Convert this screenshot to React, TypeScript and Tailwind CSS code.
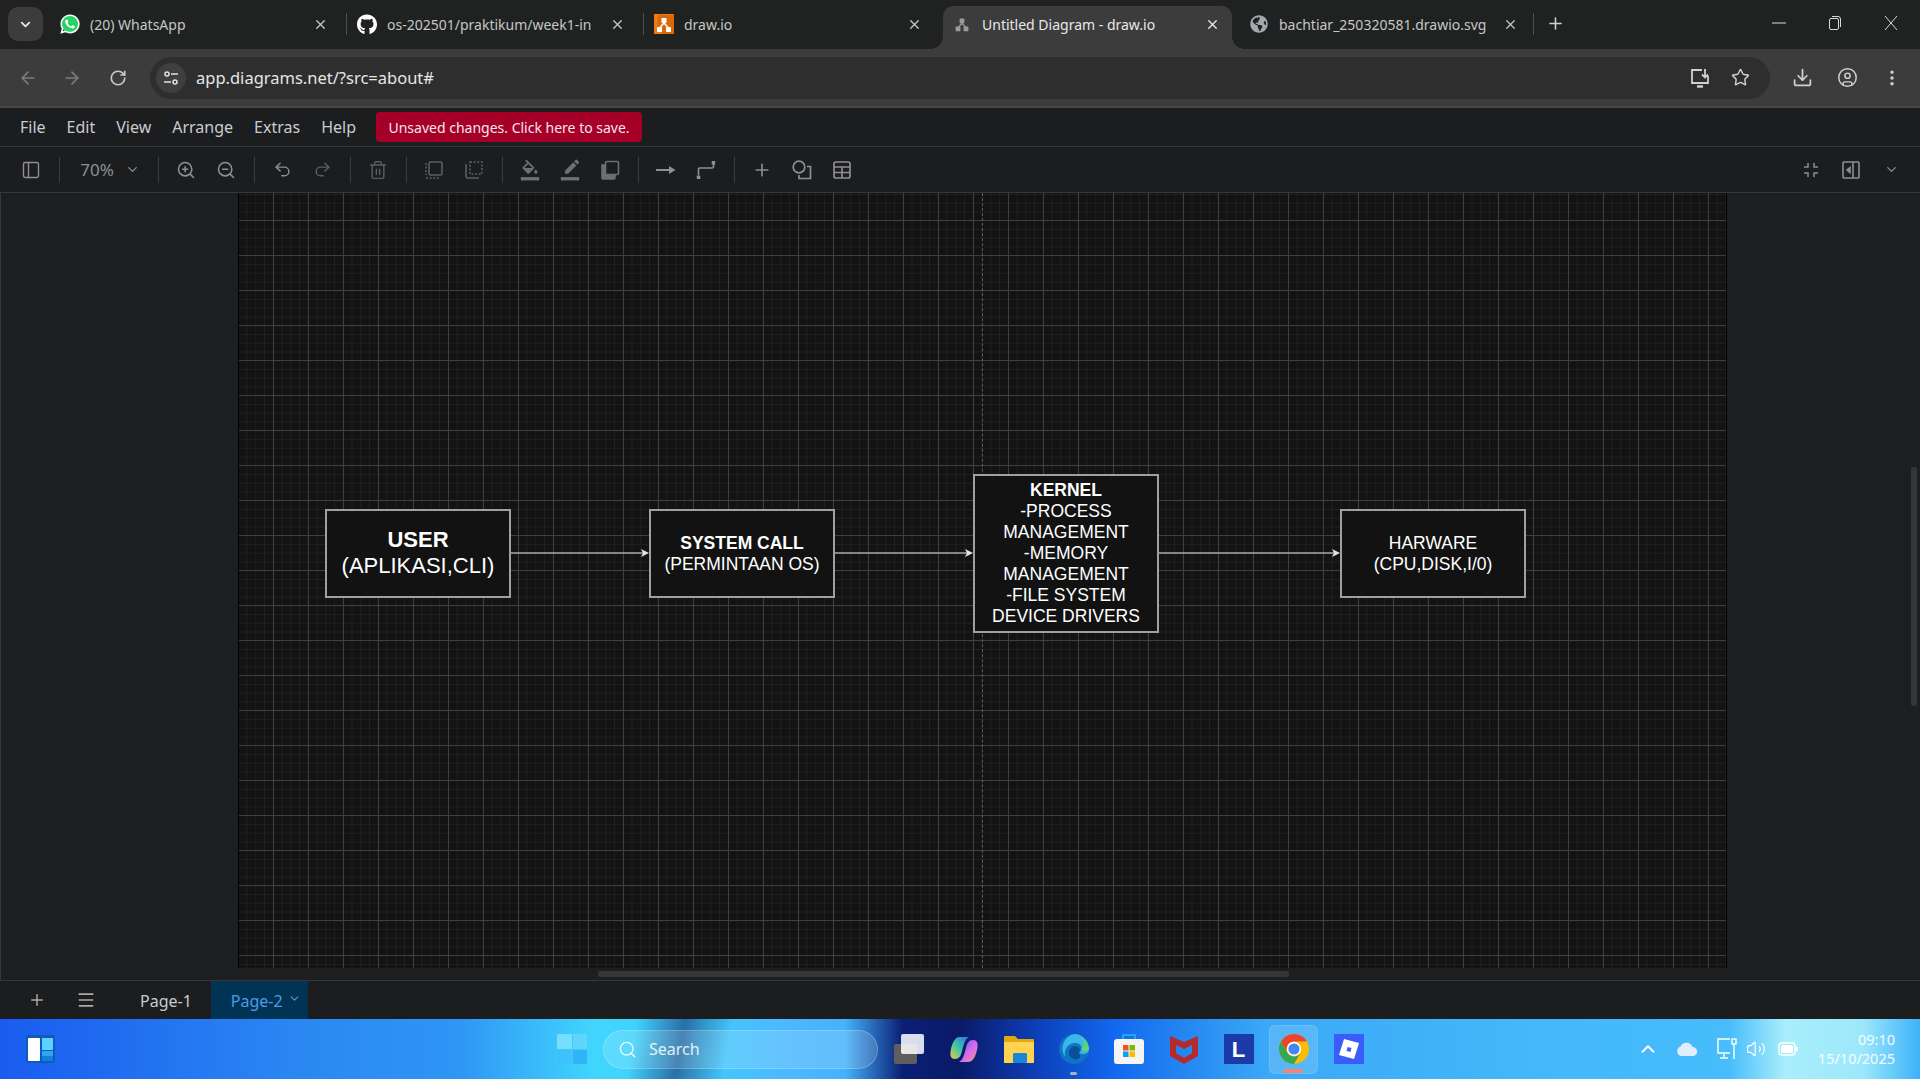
import React from "react";
import {
  ArrowLeft,
  ArrowRight,
  ChevronDown,
  ChevronUp,
  CircleUser,
  Download,
  EllipsisVertical,
  Menu,
  PanelLeft,
  Plus,
  Redo2,
  RotateCw,
  Search,
  Star,
  Trash2,
  Undo2,
  Volume2,
  X,
  ZoomIn,
  ZoomOut,
} from "lucide-react";
import { FaGithub, FaGlobeAmericas, FaWhatsapp } from "react-icons/fa";

const DrawioLogo = () => (
  <svg width="20" height="20" viewBox="0 0 20 20">
    <rect width="20" height="20" rx="1" fill="#ee7d12" />
    <path d="M4 1 L20 1 L20 20 L9 20 L3 14 Z" fill="#d9680a" />
    <path d="M10 9 L5.5 14 M10 9 L14.5 14" stroke="#fff" strokeWidth="1.4" />
    <rect x="7.5" y="4" width="5" height="5" rx="0.6" fill="#fff" />
    <rect x="3" y="13" width="5" height="5" rx="0.6" fill="#fff" />
    <rect x="12" y="13" width="5" height="5" rx="0.6" fill="#fff" />
  </svg>
);

const DrawioMono = () => (
  <svg width="16" height="16" viewBox="0 0 20 20" fill="#9a9a9a">
    <path d="M10 9 L5.5 14 M10 9 L14.5 14" stroke="#9a9a9a" strokeWidth="1.6" />
    <rect x="7" y="3" width="6" height="6" rx="0.6" />
    <rect x="2" y="13" width="6" height="6" rx="0.6" />
    <rect x="12" y="13" width="6" height="6" rx="0.6" />
  </svg>
);

const WhatsappIcon = () => (
  <span className="relative flex h-[22px] w-[22px] items-center justify-center">
    <span className="absolute left-[2px] top-[2px] h-[18px] w-[18px] rounded-full bg-[#25d366]" />
    <FaWhatsapp size={22} className="relative text-white" />
  </span>
);

const Tab = ({
  icon,
  title,
  active,
  divider,
}: {
  icon: React.ReactNode;
  title: string;
  active?: boolean;
  divider?: boolean;
}) => (
  <div
    className={
      active
        ? "relative ml-[2px] flex h-[43px] w-[289px] items-center self-end rounded-t-[10px] bg-[#3c3c3c] pb-[7px] pl-[9px] pr-[12px] text-[#e8e8e8]"
        : "relative flex h-[43px] w-[297px] items-center self-end pb-[7px] pl-[10px] pr-[19px] text-[#c4c7c5]"
    }
  >
    {active && (
      <>
        <span className="absolute -left-3 bottom-0 h-3 w-3 bg-[radial-gradient(circle_at_0_0,transparent_11.5px,#3c3c3c_12px)]" />
        <span className="absolute -right-3 bottom-0 h-3 w-3 bg-[radial-gradient(circle_at_100%_0,transparent_11.5px,#3c3c3c_12px)]" />
      </>
    )}
    <span className="flex w-[20px] shrink-0 items-center justify-center">{icon}</span>
    <span className="ml-[10px] flex-1 whitespace-nowrap text-[14px]">{title}</span>
    <X size={15} strokeWidth={2.2} className="ml-2 shrink-0" />
    {divider && <span className="absolute right-0 top-[7px] h-[22px] w-px bg-[#4c4e50]" />}
  </div>
);

const TabStrip = () => (
  <div className="flex h-[49px] shrink-0 items-stretch bg-[#202222]">
    <div className="ml-2 mt-[7px] flex h-[34px] w-[35px] items-center justify-center rounded-[10px] bg-[#3c3c3c]">
      <ChevronDown size={15} strokeWidth={3} className="text-[#e3e3e3]" />
    </div>
    <div className="ml-[7px] flex">
      <Tab icon={<WhatsappIcon />} title="(20) WhatsApp" divider />
      <Tab icon={<FaGithub size={21} className="text-white" />} title="os-202501/praktikum/week1-in" divider />
      <Tab icon={<DrawioLogo />} title="draw.io" />
      <Tab icon={<DrawioMono />} title="Untitled Diagram - draw.io" active />
      <div className="relative ml-[6px] flex h-[43px] w-[297px] items-center self-end pb-[7px] pl-[12px] pr-[17px] text-[#c4c7c5]">
        <FaGlobeAmericas size={18} className="shrink-0 text-[#a5a8aa]" />
        <span className="ml-[11px] flex-1 whitespace-nowrap text-[14px]">bachtiar_250320581.drawio.svg</span>
        <X size={15} strokeWidth={2} className="ml-2 shrink-0" />
        <span className="absolute right-[1px] top-[7px] h-[22px] w-px bg-[#4c4e50]" />
      </div>
    </div>
    <Plus size={19} strokeWidth={2} className="ml-[11px] mt-[14px] text-[#d0d0d0]" />
    <div className="ml-auto flex text-[#d8d8d8]">
      <svg width="14" height="14" viewBox="0 0 14 14" className="mr-[42px] mt-[16px]">
        <path d="M0 7 H14" stroke="currentColor" strokeWidth="1" />
      </svg>
      <svg width="14" height="18" viewBox="0 0 14 18" className="mr-[42px] mt-[15px]">
        <rect x="1.5" y="3.5" width="9" height="11" rx="1.5" fill="none" stroke="currentColor" />
        <path d="M4 1.5 H10 Q12.5 1.5 12.5 4 V12" fill="none" stroke="currentColor" />
      </svg>
      <svg width="14" height="14" viewBox="0 0 14 14" className="mr-[22px] mt-[16px]">
        <path d="M1 0 L13 14 M13 0 L1 14" stroke="currentColor" strokeWidth="1" />
      </svg>
    </div>
  </div>
);

const AddressRow = () => (
  <div className="flex h-[59px] shrink-0 items-center border-b-2 border-[#474747] bg-[#3c3c3c]">
    <ArrowLeft size={20} className="ml-[18px] text-[#7c7c7c]" />
    <ArrowRight size={20} className="ml-[24px] text-[#7c7c7c]" />
    <RotateCw size={18} strokeWidth={2.2} className="ml-[27px] text-[#c8c8c8]" />
    <div className="ml-[23px] flex h-[42px] w-[1620px] items-center rounded-full bg-[#2e2e2e] pl-[6px] pr-[20px]">
      <div className="flex h-[30px] w-[30px] items-center justify-center rounded-full bg-[#3f3f3f]">
        <svg width="16" height="16" viewBox="0 0 16 16" fill="none" stroke="#e3e3e3" strokeWidth="1.5">
          <circle cx="4" cy="4" r="2" />
          <path d="M8 4 H15 M1 12 H8" />
          <circle cx="12" cy="12" r="2" />
        </svg>
      </div>
      <span className="ml-[10px] pt-[1px] text-[16.5px] text-[#e6e6e6]">app.diagrams.net/?src=about#</span>
      <svg width="22" height="22" viewBox="0 0 22 22" fill="none" stroke="#d0d0d0" strokeWidth="1.8" className="ml-auto">
        <path d="M13 3 H3 V16 H19 V9" />
        <path d="M8 19.5 H14" strokeWidth="2.4" />
        <path d="M16 2 V10 M13 7.5 L16 10.5 L19 7.5" />
      </svg>
      <Star size={19} strokeWidth={1.8} className="ml-[20px] text-[#d0d0d0]" />
    </div>
    <Download size={21} strokeWidth={2} className="ml-[22px] text-[#d0d0d0]" />
    <CircleUser size={21} strokeWidth={1.7} className="ml-[24px] text-[#d0d0d0]" />
    <EllipsisVertical size={20} strokeWidth={2.2} className="ml-[24px] text-[#d0d0d0]" />
  </div>
);

const MenuBar = () => (
  <div className="flex h-[39px] shrink-0 items-center border-b border-[#35373a] bg-[#1c1d1f] pl-[20px] text-[16px] text-[#c9cccf]">
    <span>File</span>
    <span className="ml-[21px]">Edit</span>
    <span className="ml-[21px]">View</span>
    <span className="ml-[21px]">Arrange</span>
    <span className="ml-[21px]">Extras</span>
    <span className="ml-[21px]">Help</span>
    <button className="ml-[20px] h-[30px] w-[266px] rounded-[4px] bg-[#a60029] text-center text-[14px] text-[#f4e6ea]">
      Unsaved changes. Click here to save.
    </button>
  </div>
);

const Slot = ({ children }: { children: React.ReactNode }) => (
  <div className="flex h-full w-10 shrink-0 items-center justify-center">{children}</div>
);

const Sep = () => <span className="mx-[7.5px] h-[26px] w-px shrink-0 bg-[#3a3c3f]" />;

const EditToolbar = () => (
  <div className="flex h-[46px] shrink-0 items-center border-b border-[#35373a] bg-[#1c1d1f] pl-[11px] text-[#8e8f91]">
    <Slot>
      <PanelLeft size={20} strokeWidth={1.7} />
    </Slot>
    <Sep />
    <div className="flex h-full w-[83px] items-center justify-center pl-[3px] text-[17px]">
      <span>70%</span>
      <ChevronDown size={15} className="ml-[11px]" />
    </div>
    <Sep />
    <Slot>
      <ZoomIn size={20} strokeWidth={1.9} />
    </Slot>
    <Slot>
      <ZoomOut size={20} strokeWidth={1.9} />
    </Slot>
    <Sep />
    <Slot>
      <Undo2 size={19} strokeWidth={1.8} />
    </Slot>
    <Slot>
      <Redo2 size={19} strokeWidth={1.8} className="text-[#5c5d5f]" />
    </Slot>
    <Sep />
    <Slot>
      <Trash2 size={20} strokeWidth={1.7} className="text-[#5c5d5f]" />
    </Slot>
    <Sep />
    <Slot>
      <svg width="20" height="20" viewBox="0 0 20 20" fill="none" stroke="#5c5d5f" strokeWidth="1.6">
        <rect x="5" y="2" width="13" height="13" rx="1.5" />
        <path d="M2 3 V15 M2 18 H15" strokeDasharray="2 1.6" />
      </svg>
    </Slot>
    <Slot>
      <svg width="20" height="20" viewBox="0 0 20 20" fill="none" stroke="#5c5d5f" strokeWidth="1.6">
        <rect x="6" y="2" width="12" height="12" strokeDasharray="2 1.6" />
        <path d="M2 4 V16 Q2 18 4 18 H15" />
      </svg>
    </Slot>
    <Sep />
    <Slot>
      <svg width="20" height="22" viewBox="0 0 24 25" fill="#6e6f71">
        <path d="M16.56 8.94L7.62 0 6.21 1.41l2.38 2.38-5.15 5.15c-.59.59-.59 1.54 0 2.12l5.5 5.5c.29.29.68.44 1.06.44s.77-.15 1.06-.44l5.5-5.5c.59-.58.59-1.53 0-2.12zM5.21 10L10 5.21 14.79 10H5.21zM19 11.5s-2 2.17-2 3.5c0 1.1.9 2 2 2s2-.9 2-2c0-1.33-2-3.5-2-3.5z" />
        <path d="M1 21h22v4H1z" />
      </svg>
    </Slot>
    <Slot>
      <svg width="20" height="22" viewBox="0 0 24 25" fill="#6e6f71">
        <path d="M19.75 7L16 3.25l-10 10V17h3.75l10-10zm2.96-2.96c.39-.39.39-1.02 0-1.41L20.37.29a.9959.9959 0 0 0-1.41 0L17 2.25 20.75 6l1.96-1.96z" />
        <path d="M1 21h22v4H1z" />
      </svg>
    </Slot>
    <Slot>
      <svg width="20" height="20" viewBox="0 0 20 20" fill="none" stroke="#6e6f71" strokeWidth="1.6">
        <path d="M2 5 H5 V15 H15 V18 Q15 19 14 19 H3 Q2 19 2 18 Z" fill="#6e6f71" />
        <rect x="5.5" y="1.5" width="13" height="13" rx="1.5" />
      </svg>
    </Slot>
    <Sep />
    <Slot>
      <svg width="20" height="12" viewBox="0 0 20 12" fill="currentColor">
        <path d="M0 5 H14 V7 H0 Z" />
        <path d="M13 2 L19.5 6 L13 10 Z" />
      </svg>
    </Slot>
    <Slot>
      <svg width="20" height="20" viewBox="0 0 20 20" fill="none" stroke="currentColor" strokeWidth="1.6">
        <path d="M2.5 15 V9 Q2.5 8 3.5 8 H16 Q17.5 8 17.5 7 V4" />
        <rect x="15.7" y="1" width="3.5" height="3.5" fill="currentColor" stroke="none" />
        <rect x="0.8" y="15.5" width="3.5" height="3.5" fill="currentColor" stroke="none" />
      </svg>
    </Slot>
    <Sep />
    <Slot>
      <Plus size={20} strokeWidth={1.9} />
    </Slot>
    <Slot>
      <svg width="20" height="20" viewBox="0 0 20 20" fill="none" stroke="currentColor" strokeWidth="1.7">
        <circle cx="7" cy="7" r="5.8" />
        <path d="M15 6.5 H18.5 V18.5 H7 V15" />
      </svg>
    </Slot>
    <Slot>
      <svg width="20" height="20" viewBox="0 0 20 20" fill="none" stroke="currentColor" strokeWidth="1.7">
        <rect x="2" y="2" width="16" height="16" rx="2" />
        <path d="M2 7 H18 M2 12.5 H18 M10 7 V18" />
      </svg>
    </Slot>
    <div className="ml-auto flex h-full items-center">
      <Slot>
        <svg width="16" height="16" viewBox="0 0 16 16" fill="none" stroke="currentColor" strokeWidth="1.5">
          <path d="M5 1 V5 H1 M11 1 V5 H15 M5 15 V11 H1 M11 15 V11 H15" />
        </svg>
      </Slot>
      <Slot>
        <svg width="18" height="20" viewBox="0 0 18 20" fill="none" stroke="currentColor" strokeWidth="1.6">
          <rect x="1" y="2" width="16" height="16" rx="1" />
          <path d="M11 2 V18" />
          <path d="M8 7.5 L5 10 L8 12.5 Z" fill="currentColor" />
        </svg>
      </Slot>
      <Slot>
        <ChevronDown size={15} />
      </Slot>
      <span className="w-[9px]" />
    </div>
  </div>
);

const DiagramNode = ({
  className,
  children,
}: {
  className: string;
  children: React.ReactNode;
}) => (
  <div
    className={
      "absolute flex w-[186px] flex-col items-center justify-center border-2 border-[#a0a0a0] bg-[#121212] text-center font-['Liberation_Sans',Arial,sans-serif] text-white " +
      className
    }
  >
    {children}
  </div>
);

const Arrow = ({ x1, x2 }: { x1: number; x2: number }) => (
  <>
    <path d={`M${x1} 360 H${x2 - 6}`} stroke="#a8a8a8" strokeWidth="1.6" />
    <path d={`M${x2} 360 L${x2 - 8} 356 L${x2 - 6} 360 L${x2 - 8} 364 Z`} fill="#e4e4e4" />
  </>
);

const Canvas = () => (
  <div className="relative flex flex-1 border-b border-l border-[#35373a] bg-[#1d1e20] pl-[237px]">
    <div className="relative h-[775px] w-[1489px] border-x border-x-black bg-[#131313] bg-[linear-gradient(to_right,#3f3f3f_1px,transparent_1px),linear-gradient(to_bottom,#3f3f3f_1px,transparent_1px),linear-gradient(to_right,#1f1f1f_1px,transparent_1px),linear-gradient(to_bottom,#1f1f1f_1px,transparent_1px)] bg-[size:35px_35px,35px_35px,8.75px_8.75px,8.75px_8.75px] bg-[position:34px_27px,34px_27px,7.5px_1px,7.5px_1px]">
      <div className="absolute bottom-0 left-[743px] top-0 border-l border-dashed border-[#5a5a5a]" />
      <svg className="absolute inset-0" width="1487" height="775">
        <Arrow x1={271} x2={410} />
        <Arrow x1={595} x2={734} />
        <Arrow x1={919} x2={1101} />
      </svg>
      <DiagramNode className="left-[86px] top-[316px] h-[89px]">
        <div className="-mt-[2px] text-[22px] font-bold leading-[26px]">USER</div>
        <div className="text-[22px] leading-[26px]">(APLIKASI,CLI)</div>
      </DiagramNode>
      <DiagramNode className="left-[410px] top-[316px] h-[89px]">
        <div className="text-[17.5px] font-bold leading-[21px]">SYSTEM CALL</div>
        <div className="text-[17.5px] leading-[21px]">(PERMINTAAN OS)</div>
      </DiagramNode>
      <DiagramNode className="left-[734px] top-[281px] h-[159px]">
        <div className="text-[17.5px] font-bold leading-[21px]">KERNEL</div>
        <div className="text-[17.5px] leading-[21px]">-PROCESS</div>
        <div className="text-[17.5px] leading-[21px]">MANAGEMENT</div>
        <div className="text-[17.5px] leading-[21px]">-MEMORY</div>
        <div className="text-[17.5px] leading-[21px]">MANAGEMENT</div>
        <div className="text-[17.5px] leading-[21px]">-FILE SYSTEM</div>
        <div className="text-[17.5px] leading-[21px]">DEVICE DRIVERS</div>
      </DiagramNode>
      <DiagramNode className="left-[1101px] top-[316px] h-[89px]">
        <div className="text-[17.5px] leading-[21px]">HARWARE</div>
        <div className="text-[17.5px] leading-[21px]">(CPU,DISK,I/0)</div>
      </DiagramNode>
    </div>
    <div className="absolute bottom-[3px] left-[597px] h-[6px] w-[691px] rounded-[2px] bg-[#333537]" />
    <div className="absolute right-[3px] top-[274px] h-[239px] w-[6px] rounded-[2px] bg-[#333537]" />
  </div>
);

const PageBar = () => (
  <div className="flex h-[38px] shrink-0 items-stretch bg-[#1c1d1f] text-[16px]">
    <div className="ml-[28px] flex items-center">
      <Plus size={18} strokeWidth={2} className="text-[#a9a9a9]" />
    </div>
    <div className="ml-[30px] flex items-center">
      <Menu size={20} strokeWidth={2} className="text-[#a9a9a9]" />
    </div>
    <div className="ml-[44px] flex items-center pt-[1px] text-[#c9cccf]">Page-1</div>
    <div className="ml-[19px] flex w-[97px] items-center bg-[#013454] pl-[20px] pt-[1px] text-[#4d9be6]">
      Page-2
      <ChevronDown size={13} strokeWidth={2} className="mb-[4px] ml-[5px]" />
    </div>
  </div>
);

const Chrome = () => (
  <svg width="30" height="30" viewBox="0 0 30 30">
    <circle cx="15" cy="15" r="15" fill="#fbbc04" />
    <path d="M15 0 A15 15 0 0 0 2 7.5 L8.5 18.8 A7.5 7.5 0 0 1 15 7.5 H28 A15 15 0 0 0 15 0 Z" fill="#ea4335" />
    <path d="M2 7.5 A15 15 0 0 0 15 30 L21.5 18.8 A7.5 7.5 0 0 1 8.5 18.8 Z" fill="#34a853" />
    <circle cx="15" cy="15" r="7.2" fill="#fff" />
    <circle cx="15" cy="15" r="5.6" fill="#4285f4" />
  </svg>
);

const Copilot = () => (
  <svg width="28" height="27" viewBox="0 0 28 27">
    <defs>
      <linearGradient id="copilotLeft" x1="0" y1="1" x2="1" y2="0">
        <stop offset="0" stopColor="#f6c544" />
        <stop offset="0.45" stopColor="#3fc9a0" />
        <stop offset="1" stopColor="#2a6ff0" />
      </linearGradient>
      <linearGradient id="copilotRight" x1="0" y1="0" x2="1" y2="1">
        <stop offset="0" stopColor="#6a5cf0" />
        <stop offset="0.55" stopColor="#d46cf0" />
        <stop offset="1" stopColor="#f59a7a" />
      </linearGradient>
    </defs>
    <path d="M10 1 H19 C15 3 14 8 12 15 C11 20 9 23 5 23 C1 23 0 20 0.5 16 C1.5 9 4 1 10 1 Z" fill="url(#copilotLeft)" />
    <path d="M18 26 H9 C13 24 14 19 16 12 C17 7 19 4 23 4 C27 4 28 7 27.5 11 C26.5 18 24 26 18 26 Z" fill="url(#copilotRight)" />
  </svg>
);

const Slot55 = ({ children, className }: { children: React.ReactNode; className?: string }) => (
  <div className={"relative flex h-full w-[55px] shrink-0 items-center justify-center " + (className ?? "")}>
    {children}
  </div>
);

const Taskbar = () => (
  <div className="relative flex h-[60px] shrink-0 items-center overflow-hidden bg-[linear-gradient(100deg,transparent_33%,#2a6fa8_35.5%,transparent_38%),linear-gradient(90deg,#1a5cf0_0%,#2a86f2_15%,#2f96f5_24%,#41d6fd_31%,#3fcdfb_36%,#4cb8ff_41%,#46b2fb_44%,#0a1f74_47%,#0a1a68_50%,#0d3fb8_54%,#1268ee_58%,#3aa9f6_66%,#44b8fa_80%,#46bcfb_90%,#a9eefc_93%,#9ce8fb_97%,#3cb2f9_100%)]">
    <svg width="29" height="28" viewBox="0 0 29 28" className="ml-[26px] mb-[1px] shrink-0">
      <rect width="29" height="28" rx="2" fill="#0d5db8" />
      <rect x="2" y="3" width="12" height="23" rx="1" fill="#fff" />
      <rect x="16" y="3" width="11" height="12" fill="#5fd0ff" />
      <rect x="16" y="16" width="11" height="5" fill="#2ca6f4" />
      <rect x="16" y="21" width="11" height="5" fill="#0f7fe0" />
    </svg>
    <div className="ml-[502px] grid h-[30px] w-[30px] shrink-0 grid-cols-2 gap-[1px] opacity-70">
      <span className="rounded-tl-[2px] bg-[#8fe8ff]" />
      <span className="rounded-tr-[2px] bg-[#6fd8fc]" />
      <span className="rounded-bl-[2px] bg-[#3fc0fb]" />
      <span className="rounded-br-[2px] bg-[#2aa8f7]" />
    </div>
    <div className="ml-[16px] flex h-[39px] w-[275px] shrink-0 items-center rounded-full border border-white/20 bg-white/15 pl-[14px] text-[16px] text-white/85">
      <Search size={19} strokeWidth={1.8} />
      <span className="ml-[12px]">Search</span>
    </div>
    <div className="ml-[3px] flex h-full shrink-0">
      <Slot55>
        <div className="relative h-[30px] w-[30px]">
          <span className="absolute bottom-0 left-0 h-[20px] w-[23px] rounded-[2px] bg-[#5e5e5e]" />
          <span className="absolute right-0 top-0 h-[20px] w-[23px] rounded-[2px] bg-white/85" />
        </div>
      </Slot55>
      <Slot55>
        <Copilot />
      </Slot55>
      <Slot55>
        <svg width="30" height="28" viewBox="0 0 30 28">
          <path d="M0 2 Q0 1 1 1 H11 L14 4 H29 Q30 4 30 5 V27 Q30 28 29 28 H1 Q0 28 0 27 Z" fill="#e0a90d" />
          <path d="M0 7 H30 V27 Q30 28 29 28 H1 Q0 28 0 27 Z" fill="#ffd34f" />
          <rect x="9" y="18" width="14" height="10" rx="1" fill="#1a86d8" />
        </svg>
      </Slot55>
      <Slot55>
        <svg width="30" height="30" viewBox="0 0 30 30">
          <circle cx="15" cy="15" r="15" fill="#0f74c4" />
          <path d="M15 0 A15 15 0 0 1 30 15 C30 20 24 21 20 19 C26 14 21 8 15 9 C8 10 5 16 6 23 A15 15 0 0 1 15 0 Z" fill="#38b7e8" />
          <path d="M30 15 C30 9 24 3 17 1 C24 3 28 11 22 15 C25 18 29 18 30 15 Z" fill="#5fd470" />
          <path d="M10 19 C10 13 15 11 19 13 C22 15 21 18 19 19 C24 21 20 27 15 25 C12 24 10 22 10 19 Z" fill="#0a4f98" />
        </svg>
        <span className="absolute bottom-[4px] left-[24px] h-[3px] w-[7px] rounded-full bg-[#a8b0c8]" />
      </Slot55>
      <Slot55>
        <svg width="30" height="30" viewBox="0 0 30 30">
          <path d="M9 5 V1 H21 V5" fill="none" stroke="#1fa8f2" strokeWidth="2" />
          <rect y="5" width="30" height="25" rx="3" fill="#f4f4f4" />
          <rect x="9" y="11" width="5.5" height="5.5" fill="#f25022" />
          <rect x="15.5" y="11" width="5.5" height="5.5" fill="#7fba00" />
          <rect x="9" y="17.5" width="5.5" height="5.5" fill="#00a4ef" />
          <rect x="15.5" y="17.5" width="5.5" height="5.5" fill="#ffb900" />
        </svg>
      </Slot55>
      <Slot55>
        <svg width="28" height="30" viewBox="0 0 28 30" fill="#b32b2b">
          <path d="M0 2 L14 8 L28 2 V22 L14 30 L0 22 Z M6 11 V19 L14 24 L22 19 V11 L14 15 Z" fillRule="evenodd" />
        </svg>
      </Slot55>
      <Slot55>
        <div className="flex h-[30px] w-[30px] items-center justify-center bg-[#1c3ba8] font-['Liberation_Sans',Arial,sans-serif] text-[22px] font-bold text-white">
          L
        </div>
      </Slot55>
      <Slot55>
        <div className="flex h-[49px] w-[49px] items-center justify-center rounded-[6px] border border-white/10 bg-white/15">
          <Chrome />
        </div>
        <span className="absolute bottom-[6px] left-[17px] h-[4px] w-[20px] rounded-full bg-[#f98272]" />
      </Slot55>
      <Slot55>
        <div className="flex h-[30px] w-[30px] items-center justify-center bg-[#3a5cf8]">
          <svg width="24" height="24" viewBox="0 0 24 24">
            <path d="M7 2 L22 6 L17 22 L2 18 Z M10.5 10 L9.5 14 L13.5 15 L14.5 11 Z" fill="#fff" fillRule="evenodd" />
          </svg>
        </div>
      </Slot55>
    </div>
    <div className="ml-auto flex items-center pr-[25px] text-white">
      <ChevronUp size={22} strokeWidth={2.2} />
      <svg width="22" height="14" viewBox="0 0 22 14" fill="#dfeefa" className="ml-[17px]">
        <path d="M5 14 A5 5 0 0 1 4.5 4.5 A6.5 6.5 0 0 1 16.5 5 A4.5 4.5 0 0 1 17 14 Z" />
      </svg>
      <svg width="20" height="22" viewBox="0 0 20 22" fill="none" stroke="#fff" strokeWidth="1.4" className="ml-[19px]">
        <path d="M13 1 H1 V15 H13 M7 15 V19 M3 20 H11" />
        <rect x="15" y="1" width="4" height="5" />
        <path d="M17 6 V21" />
      </svg>
      <Volume2 size={20} strokeWidth={1.4} className="ml-[9px]" />
      <svg width="20" height="14" viewBox="0 0 20 14" className="ml-[12px]">
        <rect x="1" y="1" width="16" height="12" rx="3" fill="none" stroke="#fff" strokeWidth="1.4" />
        <rect x="3" y="3" width="12" height="8" rx="1.5" fill="#fff" />
        <rect x="18" y="5" width="2" height="4" fill="#fff" />
      </svg>
      <div className="ml-[20px] flex flex-col items-end text-[14.5px] leading-[19px] text-white/90">
        <span>09:10</span>
        <span>15/10/2025</span>
      </div>
    </div>
  </div>
);

export default function App() {
  return (
    <div className="flex h-[1079px] w-[1920px] flex-col overflow-hidden bg-[#1d1e20] font-['Noto_Sans','Open_Sans',sans-serif]">
      <TabStrip />
      <AddressRow />
      <MenuBar />
      <EditToolbar />
      <Canvas />
      <PageBar />
      <Taskbar />
    </div>
  );
}
